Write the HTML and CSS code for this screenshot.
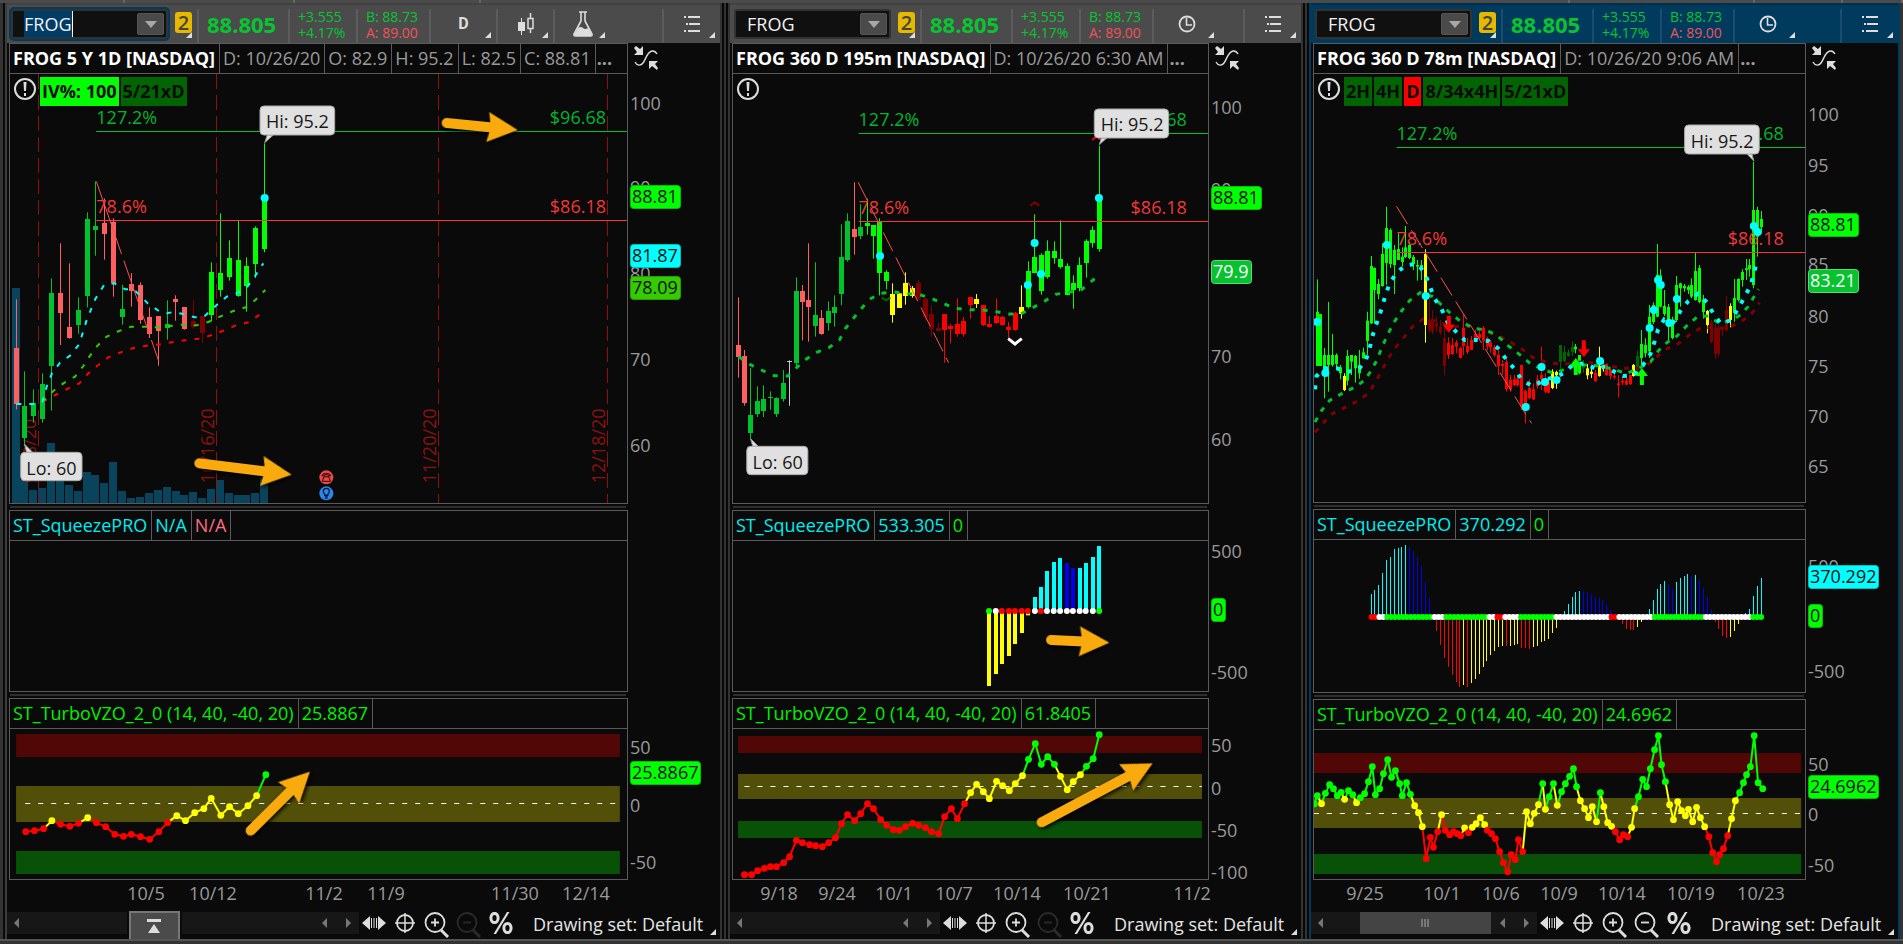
FILE: index.html
```html
<!DOCTYPE html>
<html lang="en">
<head>
<meta charset="utf-8">
<title>FROG charts</title>
<link rel="stylesheet" href="styles.css">
</head>
<body>
<svg class="sprite" aria-hidden="true">
  <symbol id="i-corner" viewBox="0 0 6 6"><path d="M6 0V6H0Z"/></symbol>
  <symbol id="i-down" viewBox="0 0 14 8"><path d="M0 0H14L7 8Z"/></symbol>
  <symbol id="i-left" viewBox="0 0 6 10"><path d="M5 0V10L0 5Z"/></symbol>
  <symbol id="i-right" viewBox="0 0 6 10"><path d="M1 0V10L6 5Z"/></symbol>
  <symbol id="i-candles" viewBox="0 0 18 22"><path d="M1 9H8V18H1ZM4 5H5V22H4Z"/><path d="M11 5.500H16V15.500H11ZM13.500 0V5M13.500 16V20" fill="none" stroke="#ddd" stroke-width="1.500"/></symbol>
  <symbol id="i-flask" viewBox="0 0 22 26"><path d="M7 1H15M9 1V10L2 23Q1.500 25 3.500 25H18.500Q20.500 25 20 23L13 10V1" fill="none" stroke="#ddd" stroke-width="1.600"/><path d="M6 17Q9 15 11 17T16 17L20 24Q20 25 18 25H4Q2 25 2 24Z"/></symbol>
  <symbol id="i-clock" viewBox="0 0 18 18"><circle cx="9" cy="9" r="7.500" fill="none" stroke="#ddd" stroke-width="1.800"/><path d="M8.500 3V10H14" fill="none" stroke="#ddd" stroke-width="1.600"/></symbol>
  <symbol id="i-list" viewBox="0 0 16 16"><path d="M0 0H2V2H0ZM4 0H16V2H4ZM2 7H4V9H2ZM5 7H16V9H5ZM0 14H2V16H0ZM4 14H16V16H4Z"/></symbol>
  <symbol id="i-alert" viewBox="0 0 24 24"><circle cx="12" cy="12" r="10" fill="none" stroke="#ddd" stroke-width="2"/><path d="M10.500 5H13.500L13 14H11ZM11 16H13V19H11Z"/></symbol>
  <symbol id="i-scale" viewBox="0 0 24 24"><path d="M1 16C3 20 7 20 9 17C12 13 13 6 18 5Q21 4.500 23 8" fill="none" stroke="#ddd" stroke-width="1.400"/><path d="M9 0V9H0L3 6L0 2L2 0L6 3ZM15 15H24L21 18L24 22L23 24L18 20L15 23Z"/></symbol>
  <symbol id="i-pan" viewBox="0 0 24 16"><path d="M8 1V15L0 8ZM16 1V15L24 8ZM9 3H10V13H9ZM11.500 3H12.500V13H11.500ZM14 3H15V13H14Z"/></symbol>
  <symbol id="i-cross" viewBox="0 0 20 20"><path d="M10 0V20M0 10H20" stroke="#ddd" stroke-width="1.500"/><circle cx="10" cy="10" r="8" fill="none" stroke="#ddd" stroke-width="1.800"/></symbol>
  <symbol id="i-zoomin" viewBox="0 0 26 26"><circle cx="11" cy="10.500" r="9.500" fill="none" stroke="#ddd" stroke-width="1.800"/><path d="M17 18L24 25" stroke="#ddd" stroke-width="3"/><path d="M11 6.500V14.500M7 10.500H15" stroke="#ddd" stroke-width="1.800"/></symbol>
  <symbol id="i-zoomout" viewBox="0 0 26 26"><circle cx="11" cy="10.500" r="9.500" fill="none" stroke="#ddd" stroke-width="1.800"/><path d="M17 18L24 25" stroke="#ddd" stroke-width="3"/><path d="M7 10.500H15" stroke="#ddd" stroke-width="1.800"/></symbol>
  <symbol id="i-percent" viewBox="0 0 24 22"><ellipse cx="5.500" cy="6" rx="3.600" ry="4.600" fill="none" stroke="#ddd" stroke-width="3"/><ellipse cx="18.500" cy="16" rx="3.600" ry="4.600" fill="none" stroke="#ddd" stroke-width="3"/><path d="M18 0H20.500L7 22H4.500Z"/></symbol>
  <symbol id="i-expand" viewBox="0 0 14 14"><path d="M0 0H14V3H0ZM7 5L13 14H1Z"/></symbol>
</svg>

<div class="tabs"><span></span><span></span><span></span><span></span><span></span><span></span><span></span></div>

<main class="workspace">
  <div class="edge"></div>

  <section class="panel" data-panel="day">
    <div class="toolbar">
      <div class="symbol">
        <div class="combo focused"><input class="symbol-input active" aria-label="Symbol" value="FROG"><button class="drop" aria-label="Symbols"><svg width="12" height="7"><use href="#i-down"/></svg></button></div>
        <button class="badge">2<svg class="corner"><use href="#i-corner"/></svg></button>
      </div>
      <div class="price">88.805</div>
      <div class="change"><span>+3.555</span><span>+4.17%</span></div>
      <div class="quote"><span>B: 88.73</span><span class="ask">A: 89.00</span></div>
      <button class="tool period">D<svg class="corner"><use href="#i-corner"/></svg></button>
      <button class="tool narrow" aria-label="Chart style"><svg width="18" height="22"><use href="#i-candles"/></svg><svg class="corner"><use href="#i-corner"/></svg></button>
      <button class="tool narrow" aria-label="Studies"><svg width="22" height="26"><use href="#i-flask"/></svg><svg class="corner"><use href="#i-corner"/></svg></button>
      <button class="tool menu" aria-label="Menu"><svg width="16" height="16"><use href="#i-list"/></svg><svg class="corner"><use href="#i-corner"/></svg></button>
    </div>
    <div class="panes">
      <div class="pane main">
        <div class="box">
          <div class="head"><b>FROG 5 Y 1D [NASDAQ]</b><span>D: 10/26/20</span><span>O: 82.9</span><span>H: 95.2</span><span>L: 82.5</span><span>C: 88.81</span><i>...</i></div>
          <div class="plot"><svg class="chart"></svg>
            <div class="flags"><svg class="alert"><use href="#i-alert"/></svg><span class="flag lime">IV%: 100</span><span class="flag">5/21xD</span></div>
          </div>
        </div>
        <div class="axis"><svg class="scale"></svg><button class="fit" aria-label="Scale"><svg width="24" height="24"><use href="#i-scale"/></svg></button></div>
      </div>
      <div class="splitter"></div>
      <div class="pane squeeze">
        <div class="box">
          <div class="head cyan"><span>ST_SqueezePRO</span><span>N/A</span><span class="pink">N/A</span></div>
          <div class="plot"><svg class="chart"></svg></div>
        </div>
        <div class="axis"><svg class="scale"></svg></div>
      </div>
      <div class="splitter"></div>
      <div class="pane vzo">
        <div class="box">
          <div class="head green"><span>ST_TurboVZO_2_0 (14, 40, -40, 20)</span><span>25.8867</span></div>
          <div class="plot"><svg class="chart"></svg></div>
        </div>
        <div class="axis"><svg class="scale"></svg></div>
      </div>
    </div>
    <div class="dates"><svg></svg></div>
    <div class="footer">
      <div class="scroll">
        <button class="step first" aria-label="Scroll left"><svg width="6" height="10"><use href="#i-left"/></svg></button>
        <div class="lane before"></div>
        <button class="expand" aria-label="Expand"><svg width="14" height="14"><use href="#i-expand"/></svg></button>
        <div class="lane after"></div>
        <button class="step" aria-label="Back"><svg width="6" height="10"><use href="#i-left"/></svg></button>
        <button class="step" aria-label="Forward"><svg width="6" height="10"><use href="#i-right"/></svg></button>
      </div>
      <div class="tools">
        <button aria-label="Pan"><svg width="24" height="16"><use href="#i-pan"/></svg></button>
        <button aria-label="Crosshair"><svg width="20" height="20"><use href="#i-cross"/></svg></button>
        <button aria-label="Zoom in"><svg width="26" height="26"><use href="#i-zoomin"/></svg></button>
        <button aria-label="Zoom out" disabled><svg width="26" height="26"><use href="#i-zoomout"/></svg></button>
        <button aria-label="Percent"><svg width="24" height="22"><use href="#i-percent"/></svg></button>
        <button class="set">Drawing set: Default<svg class="corner"><use href="#i-corner"/></svg></button>
      </div>
    </div>
  </section>

  <div class="gutter"></div>

  <section class="panel" data-panel="m195">
    <div class="toolbar">
      <div class="symbol">
        <div class="combo"><input class="symbol-input" aria-label="Symbol" value="FROG"><button class="drop" aria-label="Symbols"><svg width="12" height="7"><use href="#i-down"/></svg></button></div>
        <button class="badge">2<svg class="corner"><use href="#i-corner"/></svg></button>
      </div>
      <div class="price">88.805</div>
      <div class="change"><span>+3.555</span><span>+4.17%</span></div>
      <div class="quote"><span>B: 88.73</span><span class="ask">A: 89.00</span></div>
      <button class="tool" aria-label="Time frame"><svg width="18" height="18"><use href="#i-clock"/></svg><svg class="corner"><use href="#i-corner"/></svg></button>
      <button class="tool menu" aria-label="Menu"><svg width="16" height="16"><use href="#i-list"/></svg><svg class="corner"><use href="#i-corner"/></svg></button>
    </div>
    <div class="panes">
      <div class="pane main">
        <div class="box">
          <div class="head"><b>FROG 360 D 195m [NASDAQ]</b><span>D: 10/26/20 6:30 AM</span><i>...</i></div>
          <div class="plot"><svg class="chart"></svg>
            <div class="flags"><svg class="alert"><use href="#i-alert"/></svg></div>
          </div>
        </div>
        <div class="axis"><svg class="scale"></svg><button class="fit" aria-label="Scale"><svg width="24" height="24"><use href="#i-scale"/></svg></button></div>
      </div>
      <div class="splitter"></div>
      <div class="pane squeeze">
        <div class="box">
          <div class="head cyan"><span>ST_SqueezePRO</span><span>533.305</span><span class="green">0</span></div>
          <div class="plot"><svg class="chart"></svg></div>
        </div>
        <div class="axis"><svg class="scale"></svg></div>
      </div>
      <div class="splitter"></div>
      <div class="pane vzo">
        <div class="box">
          <div class="head green"><span>ST_TurboVZO_2_0 (14, 40, -40, 20)</span><span>61.8405</span></div>
          <div class="plot"><svg class="chart"></svg></div>
        </div>
        <div class="axis"><svg class="scale"></svg></div>
      </div>
    </div>
    <div class="dates"><svg></svg></div>
    <div class="footer">
      <div class="scroll">
        <button class="step first" aria-label="Scroll left"><svg width="6" height="10"><use href="#i-left"/></svg></button>
        <div class="lane"></div>
        <button class="step" aria-label="Back"><svg width="6" height="10"><use href="#i-left"/></svg></button>
        <button class="step" aria-label="Forward"><svg width="6" height="10"><use href="#i-right"/></svg></button>
      </div>
      <div class="tools">
        <button aria-label="Pan"><svg width="24" height="16"><use href="#i-pan"/></svg></button>
        <button aria-label="Crosshair"><svg width="20" height="20"><use href="#i-cross"/></svg></button>
        <button aria-label="Zoom in"><svg width="26" height="26"><use href="#i-zoomin"/></svg></button>
        <button aria-label="Zoom out" disabled><svg width="26" height="26"><use href="#i-zoomout"/></svg></button>
        <button aria-label="Percent"><svg width="24" height="22"><use href="#i-percent"/></svg></button>
        <button class="set">Drawing set: Default<svg class="corner"><use href="#i-corner"/></svg></button>
      </div>
    </div>
  </section>

  <div class="gutter slim"></div>

  <section class="panel selected" data-panel="m78">
    <div class="toolbar">
      <div class="symbol">
        <div class="combo"><input class="symbol-input" aria-label="Symbol" value="FROG"><button class="drop" aria-label="Symbols"><svg width="12" height="7"><use href="#i-down"/></svg></button></div>
        <button class="badge">2<svg class="corner"><use href="#i-corner"/></svg></button>
      </div>
      <div class="price">88.805</div>
      <div class="change"><span>+3.555</span><span>+4.17%</span></div>
      <div class="quote"><span>B: 88.73</span><span class="ask">A: 89.00</span></div>
      <button class="tool" aria-label="Time frame"><svg width="18" height="18"><use href="#i-clock"/></svg><svg class="corner"><use href="#i-corner"/></svg></button>
      <button class="tool menu" aria-label="Menu"><svg width="16" height="16"><use href="#i-list"/></svg><svg class="corner"><use href="#i-corner"/></svg></button>
    </div>
    <div class="panes">
      <div class="pane main">
        <div class="box">
          <div class="head"><b>FROG 360 D 78m [NASDAQ]</b><span>D: 10/26/20 9:06 AM</span><i>...</i></div>
          <div class="plot"><svg class="chart"></svg>
            <div class="flags"><svg class="alert"><use href="#i-alert"/></svg><span class="flag">2H</span><span class="flag">4H</span><span class="flag red">D</span><span class="flag">8/34x4H</span><span class="flag">5/21xD</span></div>
          </div>
        </div>
        <div class="axis"><svg class="scale"></svg><button class="fit" aria-label="Scale"><svg width="24" height="24"><use href="#i-scale"/></svg></button></div>
      </div>
      <div class="splitter"></div>
      <div class="pane squeeze">
        <div class="box">
          <div class="head cyan"><span>ST_SqueezePRO</span><span>370.292</span><span class="green">0</span></div>
          <div class="plot"><svg class="chart"></svg></div>
        </div>
        <div class="axis"><svg class="scale"></svg></div>
      </div>
      <div class="splitter"></div>
      <div class="pane vzo">
        <div class="box">
          <div class="head green"><span>ST_TurboVZO_2_0 (14, 40, -40, 20)</span><span>24.6962</span></div>
          <div class="plot"><svg class="chart"></svg></div>
        </div>
        <div class="axis"><svg class="scale"></svg></div>
      </div>
    </div>
    <div class="dates"><svg></svg></div>
    <div class="footer">
      <div class="scroll">
        <button class="step first" aria-label="Scroll left"><svg width="6" height="10"><use href="#i-left"/></svg></button>
        <div class="lane short"></div>
        <div class="thumb"><span></span><span></span><span></span></div>
        <button class="step" aria-label="Back"><svg width="6" height="10"><use href="#i-left"/></svg></button>
        <button class="step" aria-label="Forward"><svg width="6" height="10"><use href="#i-right"/></svg></button>
      </div>
      <div class="tools">
        <button aria-label="Pan"><svg width="24" height="16"><use href="#i-pan"/></svg></button>
        <button aria-label="Crosshair"><svg width="20" height="20"><use href="#i-cross"/></svg></button>
        <button aria-label="Zoom in"><svg width="26" height="26"><use href="#i-zoomin"/></svg></button>
        <button aria-label="Zoom out"><svg width="26" height="26"><use href="#i-zoomout"/></svg></button>
        <button aria-label="Percent"><svg width="24" height="22"><use href="#i-percent"/></svg></button>
        <button class="set">Drawing set: Default<svg class="corner"><use href="#i-corner"/></svg></button>
      </div>
    </div>
  </section>

  <div class="edge right"></div>
</main>
<div class="base"></div>
<script src="script.js"></script>
</body>
</html>
```
FILE: styles.css
```css
* { box-sizing: border-box; }

body {
  margin: 0;
  height: 100vh;
  display: flex;
  flex-direction: column;
  background: #0a0a0a;
  color: #9a9a9a;
  font: 18px/24px "Open Sans", "Noto Sans", sans-serif;
  overflow: hidden;
}

button, input {
  font: inherit;
  color: inherit;
  background: none;
  border: 0;
  padding: 0;
  margin: 0;
}

svg { display: block; fill: #ddd; }
.sprite { position: absolute; width: 0; height: 0; }

.tabs {
  height: 3px;
  display: grid;
  grid-template-columns: 125fr 170fr 186fr 1089fr 185fr 88fr 60fr;
  background: #4b4b4b;
}
.tabs span { border-right: 2px solid #666; }

.workspace {
  flex: 1;
  min-height: 0;
  display: grid;
  grid-template-columns: 7px 713fr 10px 571fr 8px 591fr 3px;
}
.edge { background: linear-gradient(90deg, #333 3px, #0a0a0a 3px 5px, #3c3c3c 5px); }
.edge.right { background: #333; }
.gutter { background: linear-gradient(90deg, #333 2px, #080808 2px 4px, #333 4px 6px, #080808 6px 8px, #333 8px); }
.gutter.slim { background: linear-gradient(90deg, #333 2px, #080808 2px 4px, #333 4px 6px, #080808 6px); }
.base { height: 5px; border-top: 2px solid #555; background: #333; }

.panel { display: flex; flex-direction: column; min-width: 0; }
.panel.selected { border: solid #003a5c; border-width: 0 2px; }

.toolbar {
  height: 40px;
  padding-top: 4px;
  display: flex;
  background: #4b4b4b;
  border-top: 2px solid #424242;
  color: #09c432;
}
.selected .toolbar { background: #003a5c; border-color: #00304d; }
.toolbar > * { border-left: 2px solid #5c5c5c; }
.selected .toolbar > * { border-color: #1d4d6c; }
.toolbar > .symbol { width: 190px; border: 0; display: flex; gap: 7px; padding-left: 4px; }
.combo {
  width: 157px;
  height: 30px;
  display: flex;
  align-items: center;
  justify-content: space-between;
  padding: 0 2px 0 11px;
  background: #101010;
  border: 2px solid #333;
  border-radius: 3px;
}
.combo.focused { box-shadow: 0 0 0 2px #003a5c; }
.symbol-input { width: 90px; height: 26px; color: #f0f0f0; outline: 0; }
.symbol-input.active { width: 49px; background: #003d66; border-right: 1px solid #fff; }
.drop { width: 27px; height: 22px; background: #4a4a4a; border: 1px solid #555; border-radius: 2px; display: grid; place-items: center; }
.drop svg { fill: #a8a8a8; }
.badge {
  position: relative;
  width: 17px;
  height: 21px;
  margin-top: 3px;
  background: #e6b800;
  border-radius: 3px;
  color: #444;
  font-weight: 600;
  font-size: 20px;
  line-height: 20px;
}
.corner { position: absolute; right: 5px; bottom: 5px; width: 6px; height: 6px; }
.badge .corner { right: 0; bottom: -5px; }
.price { width: 91px; padding-left: 8px; font-size: 22px; font-weight: 700; line-height: 31px; }
.change, .quote { display: flex; flex-direction: column; padding-left: 8px; font-size: 14px; line-height: 16px; }
.change { width: 68px; }
.quote { width: 73px; }
.ask { color: #f0525a; }
.tool { position: relative; width: 67px; height: 34px; display: grid; place-items: center; color: #ddd; padding-bottom: 4px; }
.tool.narrow { width: 57px; }
.tool.menu { width: 58px; margin-left: auto; }
.tool.period { font: 700 16px/24px Roboto, sans-serif; }

.panes { flex: 1; min-height: 0; display: flex; flex-direction: column; padding-left: 2px; }
.pane { display: flex; min-height: 0; flex: 182 1 0; }
.pane.main { flex-grow: 461; }
.selected .pane.main { flex-grow: 460; }
.selected .pane.squeeze { flex-grow: 184; }
.selected .pane.vzo { flex-grow: 181; }
.splitter { height: 6px; padding: 2px 0; margin: 0 94px 0 1px; }
.splitter::before { content: ""; display: block; height: 2px; background: #2e2e2e; }
.box { flex: 1; min-width: 0; display: flex; flex-direction: column; border: 1px solid #5a5a5a; }
.head { height: 30px; display: flex; border-bottom: 1px solid #5a5a5a; white-space: nowrap; line-height: 28px; overflow: hidden; }
.head > * { padding: 0 4px 0 3px; border-right: 1px solid #5a5a5a; }
.head b { color: #fff; }
.head i { border: 0; padding: 0 1px; font-style: normal; font-weight: 700; }
.cyan { color: #00ecf0; }
.pink { color: #ff6b81; }
.green { color: #00f000; }
.plot { position: relative; flex: 1; min-height: 0; overflow: hidden; }
.chart { position: absolute; inset: 0; width: 100%; height: 100%; }
.flags { position: absolute; top: 3px; left: 3px; display: flex; gap: 2px; }
.alert { width: 24px; height: 24px; margin-right: 1px; }
.flag { height: 29px; padding: 0 2px; background: #006400; color: #0a0a0a; font-weight: 700; line-height: 29px; }
.flag.lime { background: #0f0; }
.flag.red { background: #f00; }
.axis { position: relative; width: 92px; }
.scale { position: absolute; inset: 0; width: 100%; height: 100%; overflow: visible; }
.fit { position: relative; display: block; margin: 3px 0 0 6px; }

.dates { height: 31px; padding-left: 2px; }
.dates svg { width: 100%; height: 100%; }

.footer { height: 28px; padding-top: 1px; display: flex; align-items: flex-start; }
.scroll { flex: 1; height: 22px; display: flex; background: #171717; }
.step { width: 23px; display: grid; place-items: center; }
.step.first { width: 19px; }
.step svg { fill: #777; }
.lane { flex: 1; }
.lane.before { flex: 103; }
.lane.after { flex: 134; }
.expand {
  width: 51px;
  height: 28px;
  margin-top: -1px;
  display: grid;
  place-items: center;
  background: #4b4b4b;
  border: 2px solid #777;
  border-bottom: 0;
  box-shadow: 0 0 0 2px #0a0a0a;
}
.lane.short { flex: 30; }
.thumb { flex: 133; background: #444; display: flex; gap: 1px; align-items: center; justify-content: center; }
.thumb span { width: 2px; height: 8px; background: #777; }
.tools { width: 361px; height: 27px; display: flex; }
.tools button { width: 32px; height: 22px; display: grid; place-items: center; }
.tools button:first-child { width: 30px; }
.tools button:disabled { opacity: 0.15; }
.tools .set { position: relative; width: 203px; height: 24px; display: block; padding-left: 16px; text-align: left; color: #e4e4e4; line-height: 23px; }
.tools .set .corner { right: 4px; bottom: 1px; }

svg text { font-size: 18px; }
```
FILE: script.js
```js
const C = {
  g: '#00c22d', G: '#00ff00', p: '#ff5f5f', R: '#ff0000', d: '#7f0000',
  D: '#006400', Y: '#ffff00', w: '#c8c8c8', W: '#ffffff', C: '#00ffff', B: '#0000f5'
};
const NS = 'http://www.w3.org/2000/svg';

/* A plane maps data units to the current size of its svg. */
class Plane {
  constructor(svg, area, grid) {
    svg.replaceChildren();
    this.svg = svg;
    const r = svg.getBoundingClientRect();
    this.W = r.width;
    this.H = r.height;
    this.a = area;
    this.g = grid;
  }
  x(v) { return (this.g.ox + v / this.g.kx - this.a[0]) * this.W / this.a[2]; }
  y(v) { return (this.g.oy + v / this.g.ky - this.a[1]) * this.H / this.a[3]; }
  el(tag, attrs, text) {
    const e = document.createElementNS(NS, tag);
    for (const k in attrs) e.setAttribute(k, attrs[k]);
    if (text !== undefined) e.textContent = text;
    this.svg.appendChild(e);
    return e;
  }
  line(x1, y1, x2, y2, stroke, extra) {
    return this.el('line', { x1: this.x(x1), y1: this.y(y1), x2: this.x(x2), y2: this.y(y2), stroke, ...extra });
  }
  level(x1, y, stroke) {
    this.el('rect', { x: this.x(x1), y: Math.round(this.y(y) - 0.5), width: this.W, height: 1, fill: stroke });
  }
  text(x, y, s, fill, anchor) {
    this.el('text', { x: this.x(x), y: this.y(y), fill, 'text-anchor': anchor || 'start' }, s);
  }
  dot(x, y, r, fill) { this.el('circle', { cx: this.x(x), cy: this.y(y), r, fill }); }
  path(pts, stroke, width, dash) {
    const d = pts.map((p, i) => (i ? 'L' : 'M') + this.x(p[0]) + ' ' + this.y(p[1])).join('');
    this.el('path', { d, stroke, fill: 'none', 'stroke-width': width, 'stroke-dasharray': dash || 'none' });
  }
  candles(list, bw) {
    for (const [x, hi, top, bot, lo, c] of list) {
      const cx = Math.round(this.x(x) - 0.5);
      this.el('rect', { x: cx, y: this.y(hi), width: 1, height: this.y(lo) - this.y(hi), fill: C[c] });
      this.el('rect', { x: cx - (bw - 1) / 2, y: this.y(top), width: bw, height: Math.max(1, this.y(bot) - this.y(top)), fill: C[c] });
    }
  }
  callout(x1, y1, x2, y2, tip, base, tx, ty, s) {
    this.el('path', { d: `M${this.x(tip[0])} ${this.y(tip[1])}L${this.x(base[0])} ${this.y(base[2])}H${this.x(base[1])}Z`, fill: '#e0e0e0', stroke: '#999' });
    this.el('rect', { x: this.x(x1), y: this.y(y1), width: this.x(x2) - this.x(x1), height: this.y(y2) - this.y(y1), rx: 4, fill: '#e0e0e0', stroke: '#aaa' });
    this.text(tx, ty, s, '#181818');
  }
  arrow(x1, y1, x2, y2) {
    const ax = this.x(x1), ay = this.y(y1), bx = this.x(x2), by = this.y(y2);
    const len = Math.hypot(bx - ax, by - ay), a = Math.atan2(by - ay, bx - ax) * 180 / Math.PI;
    this.el('path', {
      d: `M0 -5H${len - 28}L${len - 30} -15L${len} 0L${len - 30} 15L${len - 28} 5H0A5 5 0 0 1 0 -5Z`,
      transform: `translate(${ax} ${ay}) rotate(${a})`, fill: '#f9ab0e',
      style: 'filter:drop-shadow(1px 2px 2px #000)'
    });
  }
  fib(x, right, up, upText, dn, dnText, diag, dash) {
    this.level(x, up, '#00c22d');
    this.level(x, dn, '#ff3333');
    this.path(diag, '#ff5050', 1, dash);
    this.text(x, upText, '127.2%', '#00b52d');
    this.text(right, upText, '$96.68', '#00b52d', 'end');
    this.text(x, dnText, '78.6%', '#f03838');
    this.text(right, dnText, '$86.18', '#f03838', 'end');
  }
}

const DATA = {
  day: {
    main: {
      area: [10, 74, 617, 429], grid: { ox: 0, oy: 110, kx: 3, ky: 3 },
      candles: [[49,568,714,882,898,'p'],[73,784,888,984,1002,'g'],[100,838,879,918,938,'g'],[127,790,822,927,938,'g'],[154,505,549,768,902,'g'],[181,400,549,609,705,'p'],[208,460,651,684,686,'p'],[235,562,600,645,671,'g'],[262,307,327,558,592,'g'],[286,214,348,360,437,'g'],[313,265,339,372,449,'p'],[340,325,336,519,560,'p'],[367,524,597,621,644,'g'],[394,489,522,543,590,'p'],[421,517,525,630,641,'p'],[448,592,621,672,684,'p'],[475,618,618,663,767,'p'],[502,571,642,654,689,'g'],[526,556,567,576,632,'p'],[553,591,591,657,659,'p'],[580,571,633,651,656,'d'],[607,618,618,669,700,'d'],[634,457,486,615,634,'G'],[661,310,489,540,560,'G'],[688,391,444,501,512,'G'],[715,333,450,558,560,'G'],[739,442,468,528,605,'G'],[766,349,354,462,504,'G'],[793,100,264,417,427,'G']],
      volume: [[36,534],[60,1110],[87,1140],[114,1134],[141,999],[168,1110],[195,1125],[222,1143],[249,1086],[273,1095],[300,1119],[327,1056],[354,1143],[381,1164],[408,1161],[435,1149],[462,1140],[489,1131],[515,1143],[540,1155],[567,1146],[594,1164],[621,1137],[648,1110],[675,1149],[702,1155],[726,1155],[753,1149],[780,1100]],
      cyan: [[49,882],[100,882],[127,876],[140,830],[156,790],[180,758],[210,737],[238,702],[260,630],[286,567],[313,524],[343,520],[376,538],[400,538],[420,556],[443,580],[478,604],[500,610],[520,606],[550,612],[585,622],[612,620],[650,585],[680,560],[712,549],[742,530],[766,497],[790,460]],
      green: [[127,876],[160,843],[190,820],[225,800],[250,768],[268,740],[290,710],[320,680],[357,663],[393,650],[430,650],[470,652],[510,648],[548,644],[590,646],[625,636],[660,620],[700,603],[738,592],[766,570],[796,540]],
      red: [[127,876],[166,855],[205,835],[238,820],[265,790],[295,765],[325,742],[362,727],[400,714],[440,707],[480,703],[515,697],[555,691],[595,686],[630,677],[668,663],[705,647],[745,637],[785,610]],
      expiry: [[115,'9/18/20'],[649,'10/16/20'],[1315,'11/20/20'],[1822,'12/18/20']]
    },
    vzo: {
      area: [10, 729, 617, 150], grid: { ox: 0, oy: 500, kx: 2.178, ky: 3 },
      x: [35, 1350], bands: [702, 771, 858, 966, 1053, 1122], zero: 913, from: 55,
      pts: [['R',56,995,75,992,95,986],['Y',113,962],['R',132,973,152,979,171,970],['Y',191,953],['R',210,968,230,980,250,1003,269,1009,286,1003,306,1010,326,1018,346,995,365,968],['Y',385,947,404,962,424,938,444,926,460,895,481,946,500,920,519,941,540,917,559,887],['G',579,824]],
      arrow: [546, 992, 675, 815]
    },
    axis: {
      main: [[43, 461], ['t', 104, '100'], ['t', 188, '90'], ['t', 274, '80'], ['t', 360, '70'], ['t', 446, '60'], ['G', 197, '88.81'], ['C', 256, '81.87'], ['k', 288, '78.09']],
      squeeze: [[510, 182]],
      vzo: [[698, 182], ['t', 748, '50'], ['t', 806, '0'], ['t', 863, '-50'], ['G', 773, '25.8867']]
    },
    dates: [[9, 711], [146, '10/5'], [213, '10/12'], [324, '11/2'], [386, '11/9'], [515, '11/30'], [586, '12/14']]
  },
  m195: {
    main: {
      area: [733, 74, 475, 429], grid: { ox: 720, oy: 110, kx: 2.8, ky: 3 },
      candles: [[52,562,705,741,803,'p'],[69,720,738,879,887,'p'],[85,774,915,969,985,'g'],[105,829,873,912,921,'g'],[122,826,867,903,921,'g'],[141,844,861,863,899,'g'],[158,862,864,912,921,'g'],[178,780,819,867,875,'g'],[195,751,753,755,887,'w'],[214,502,543,759,772,'g'],[231,525,543,576,691,'p'],[248,400,570,591,695,'p'],[267,457,615,648,680,'g'],[284,600,624,672,674,'p'],[304,574,603,639,662,'g'],[321,556,591,609,650,'g'],[340,343,441,552,586,'g'],[357,310,333,450,455,'g'],[376,217,357,381,434,'p'],[393,283,351,378,388,'g'],[413,266,339,348,374,'G'],[430,345,345,378,446,'G'],[447,325,336,489,556,'G'],[466,481,486,513,538,'G'],[483,520,552,615,638,'Y'],[502,550,550,594,594,'Y'],[519,487,519,558,584,'Y'],[539,528,534,558,563,'Y'],[556,511,519,568,570,'d'],[575,562,567,621,632,'d'],[592,586,612,657,680,'d'],[612,638,654,663,665,'d'],[628,612,612,660,758,'R'],[645,642,648,657,700,'R'],[665,565,642,672,680,'R'],[682,621,633,672,680,'R'],[701,561,561,585,626,'R'],[718,552,567,582,594,'Y'],[738,585,585,645,648,'R'],[755,618,642,651,653,'R'],[774,565,618,639,641,'R'],[791,618,621,645,647,'R'],[808,636,651,660,692,'R'],[827,606,609,660,662,'R'],[844,526,591,612,626,'Y'],[864,454,483,591,595,'G'],[881,313,441,489,490,'G'],[900,430,435,543,554,'G'],[917,391,423,501,506,'G'],[936,394,423,444,461,'G'],[953,331,447,471,476,'G'],[973,460,468,555,556,'G'],[990,496,519,540,596,'G'],[1007,442,465,534,544,'G'],[1026,388,393,459,503,'G'],[1043,349,360,399,413,'G'],[1062,108,264,417,425,'G']],
      green: [[52,740],[85,764],[120,782],[152,797],[190,798],[213,774],[242,747],[271,727],[306,712],[334,691],[351,656],[372,627],[394,598],[418,568],[450,550],[488,546],[524,551],[560,554],[594,566],[626,581],[660,595],[700,599],[735,600],[770,604],[808,612],[842,612],[876,593],[908,574],[940,553],[975,547],[1010,541],[1038,516],[1065,492]],
      dots: [[448,438],[881,399],[899,492],[862,525],[1061,264]]
    },
    squeeze: {
      area: [733, 541, 475, 150], grid: { ox: 720, oy: 500, kx: 2.658, ky: 3 }, zero: 333, bar: 4, r: 3,
      bars: [['Y',715,558,733,522,749,492,768,468,784,432,802,399,818,346],['C',837,291,853,261,869,213,887,186,904,174],['B',922,189,938,204],['C',956,204,972,189,991,171,1008,138]],
      dots: [[715,'G'],[733,'W'],[749,'R'],[768,'R'],[784,'R'],[802,'R'],[818,'R'],[837,'W'],[853,'R'],[869,'W'],[887,'W'],[904,'W'],[922,'W'],[938,'W'],[956,'W'],[972,'W'],[991,'W'],[1008,'G']],
      arrow: [880, 420, 1035, 428]
    },
    vzo: {
      area: [733, 729, 475, 150], grid: { ox: 720, oy: 500, kx: 2.658, ky: 3 },
      x: [48, 1281], bands: [708, 759, 822, 897, 963, 1014], zero: 862, from: 65,
      pts: [['R',65,1124,84,1124,100,1112,118,1105,134,1100,150,1100,169,1088,185,1070,203,1021,219,1028,238,1034,254,1037,272,1040,289,1028,307,1013,323,971,339,944,358,962,374,941,392,911,408,926,427,959,443,976,461,989,477,991,493,980,512,970,528,976,546,983,562,995,581,1001,597,950,615,926,631,956,650,911],['Y',666,878,682,853,700,875,716,896,735,844,751,857,769,872,785,851,804,827],['G',820,778,838,731,854,793,871,770,889,793],['Y',905,829,923,869,939,845,958,824],['G',974,799,992,776,1008,704]],
      arrow: [855, 967, 1150, 790]
    },
    axis: {
      main: [[43, 461], ['t', 108, '100'], ['t', 190, '90'], ['t', 357, '70'], ['t', 440, '60'], ['G', 198, '88.81'], ['g', 272, '79.9']],
      squeeze: [[510, 182], ['t', 552, '500'], ['t', 673, '-500'], ['G', 610, '0']],
      vzo: [[698, 182], ['t', 746, '50'], ['t', 789, '0'], ['t', 831, '-50'], ['t', 873, '-100']]
    },
    dates: [[732, 569], [779, '9/18'], [837, '9/24'], [894, '10/1'], [954, '10/7'], [1017, '10/14'], [1087, '10/21'], [1192, '11/2']]
  },
  m78: {
    main: {
      area: [1314, 74, 491, 428], grid: { ox: 1300, oy: 110, kx: 2.6, ky: 3 },
      candles: [[45,508,605,768,768,'G'],[53,612,612,768,768,'G'],[64,714,735,790,865,'G'],[74,576,735,765,845,'G'],[85,672,735,765,770,'G'],[95,730,735,762,780,'G'],[106,765,772,790,808,'G'],[116,790,798,840,843,'Y'],[123,720,738,812,826,'G'],[134,735,735,755,795,'G'],[145,735,738,775,818,'G'],[155,720,765,790,806,'G'],[165,713,727,745,745,'G'],[176,605,632,693,735,'G'],[186,438,468,640,642,'G'],[194,472,474,540,640,'G'],[204,507,522,552,568,'G'],[214,400,432,528,530,'G'],[225,290,354,459,524,'G'],[235,355,360,462,474,'G'],[245,405,420,465,552,'G'],[256,370,417,450,450,'G'],[266,412,440,456,470,'G'],[274,348,412,441,444,'G'],[285,397,405,444,448,'G'],[296,435,441,462,480,'G'],[306,450,465,470,512,'G'],[316,450,465,480,510,'G'],[326,418,432,645,698,'Y'],[337,565,630,660,668,'d'],[345,600,635,665,672,'d'],[355,620,640,650,665,'d'],[366,630,650,668,675,'d'],[376,640,684,768,797,'d'],[386,682,699,735,747,'R'],[396,684,705,732,735,'R'],[407,690,697,710,730,'R'],[417,710,714,744,745,'R'],[425,612,654,708,735,'R'],[436,684,708,726,732,'R'],[446,678,690,720,720,'R'],[456,660,672,690,692,'R'],[467,660,672,684,690,'R'],[477,648,654,692,720,'R'],[488,680,685,708,720,'R'],[496,690,697,712,728,'R'],[506,705,712,735,740,'R'],[516,715,735,768,795,'R'],[527,750,762,768,795,'R'],[537,745,756,838,845,'R'],[547,795,810,838,845,'R'],[557,795,808,826,828,'R'],[565,795,808,825,830,'R'],[576,765,765,890,900,'R'],[586,840,843,895,940,'R'],[597,808,834,864,868,'R'],[607,820,838,868,870,'R'],[617,795,808,828,836,'R'],[628,710,795,808,840,'R'],[638,790,805,845,850,'R'],[645,800,815,848,850,'R'],[656,778,785,834,837,'Y'],[667,782,786,796,836,'Y'],[677,705,705,756,780,'D'],[687,708,726,753,756,'D'],[697,718,727,738,740,'D'],[708,694,711,726,738,'D'],[716,702,710,718,730,'G'],[727,735,735,790,793,'G'],[737,750,760,775,788,'D'],[747,762,775,796,808,'Y'],[758,770,785,792,804,'Y'],[768,780,789,813,815,'R'],[778,710,760,798,800,'Y'],[789,750,765,775,785,'Y'],[797,760,762,795,798,'R'],[807,775,780,798,808,'R'],[818,784,797,802,808,'R'],[828,795,820,826,862,'R'],[838,795,812,818,826,'R'],[848,800,812,824,826,'R'],[859,795,795,822,825,'R'],[867,762,765,798,800,'Y'],[878,722,738,778,795,'D'],[888,660,702,744,765,'G'],[898,685,705,730,742,'G'],[909,585,620,724,744,'G'],[919,577,585,636,642,'G'],[929,402,494,620,622,'G'],[938,478,496,590,592,'G'],[948,540,588,612,618,'G'],[958,582,591,650,690,'G'],[969,620,640,684,688,'G'],[979,498,525,630,636,'G'],[989,518,520,535,590,'G'],[999,522,528,535,545,'G'],[1010,525,530,540,552,'G'],[1018,505,525,560,565,'G'],[1028,427,483,570,572,'G'],[1039,465,474,576,580,'G'],[1049,555,568,606,626,'G'],[1060,600,603,645,670,'Y'],[1070,630,636,696,700,'d'],[1080,640,654,732,748,'d'],[1088,640,654,732,742,'d'],[1099,650,652,660,678,'d'],[1109,558,600,660,665,'d'],[1119,580,588,630,652,'Y'],[1130,507,564,608,635,'G'],[1140,505,507,570,575,'G'],[1151,478,486,510,530,'G'],[1161,447,475,480,510,'G'],[1169,447,465,478,500,'G'],[1179,155,300,525,535,'G'],[1190,290,300,380,440,'G'],[1200,303,327,351,370,'G']],
      cyan: [[39,838],[43,798],[64,775],[96,775],[123,786],[154,776],[172,748],[182,710],[190,672],[201,634],[212,597],[221,560],[232,523],[250,490],[274,466],[306,461],[325,492],[337,526],[348,562],[368,597],[385,640],[405,664],[428,690],[460,690],[490,693],[516,716],[536,748],[558,777],[576,808],[604,829],[640,808],[668,800],[690,786],[708,765],[740,760],[775,780],[790,770],[812,782],[840,798],[868,796],[892,765],[911,732],[922,694],[931,658],[947,628],[970,638],[989,603],[1009,574],[1035,551],[1058,577],[1075,612],[1095,642],[1120,630],[1140,595],[1155,562],[1172,526],[1180,488],[1190,450]],
      green: [[39,936],[56,902],[77,871],[109,851],[141,832],[166,813],[184,784],[200,750],[213,712],[228,673],[245,636],[264,603],[285,572],[312,548],[345,560],[368,585],[393,612],[420,636],[452,655],[484,660],[514,678],[540,706],[568,731],[596,758],[625,775],[655,788],[680,782],[715,765],[760,765],[795,772],[850,790],[880,775],[912,755],[932,722],[955,697],[980,678],[1005,648],[1033,620],[1062,618],[1090,640],[1125,630],[1145,615],[1165,590],[1178,565],[1192,538]],
      red: [[39,967],[62,937],[84,911],[116,893],[150,873],[178,850],[194,820],[212,783],[228,748],[245,717],[268,685],[290,653],[320,627],[350,632],[400,650],[440,648],[480,662],[515,677],[548,697],[580,720],[605,742],[640,757],[680,763],[740,755],[790,765],[840,775],[880,775],[910,760],[930,738],[955,716],[985,700],[1015,672],[1045,652],[1110,655],[1145,636],[1172,615],[1195,578]],
      dots: [[45,636],[66,789],[226,405],[327,558],[587,891],[628,771],[637,816],[667,810],[780,753],[909,654],[920,600],[931,510],[938,525],[960,639],[980,567],[1180,348],[1190,366]]
    },
    squeeze: {
      area: [1314, 540, 491, 152], grid: { ox: 1300, oy: 500, kx: 2.6, ky: 3 }, zero: 351, bar: 1, r: 3,
      bars: [['C',186,282,194,270,204,255,214,219,225,180,235,171,245,147,256,144,264,141,274,135],['B',284,141,295,153,305,171,316,198,326,246,337,294],['R',355,393,365,435,376,474,386,501,396,525,407,546,414,561],['Y',425,555],['R',435,561],['Y',446,549,456,537,466,522,477,501,485,483,495,465,505,453,516,441,526,438],['R',537,438],['Y',547,438,557,435,565,432],['R',576,444,586,444,596,447],['Y',607,441,617,438,628,426,635,423,646,417,656,399,667,384],['C',687,333,698,312,708,291,716,276,726,273],['B',737,273,747,276,758,282,768,291,778,294,786,300,797,315,808,330],['R',838,372,849,387,859,390,867,390],['Y',878,381,888,366],['C',909,327,919,300,929,267,937,252,948,243],['B',958,252,968,267],['C',979,246,989,234,1000,228,1007,222],['B',1018,228],['C',1028,225],['B',1039,240,1049,264,1059,291,1070,327],['R',1080,366,1088,387,1098,408,1109,414],['Y',1119,411,1130,393,1140,372],['C',1158,339,1169,327,1179,288,1189,258,1200,234]],
      runs: [['R',200],['W',220],['G',340],['W',380],['G',490],['W',511],['R',531],['W',570],['G',662],['W',803],['R',823],['W',914],['G',1055],['W',1175],['G',1205]]
    },
    vzo: {
      area: [1314, 730, 491, 149], grid: { ox: 1300, oy: 690, kx: 2.6, ky: 3 },
      x: [36, 1303], bands: [189, 249, 324, 414, 492, 552], zero: 371, from: 36,
      pts: [['G',37,342,45,317],['Y',56,341],['G',66,310,77,284,87,296,97,317,107,307],['Y',116,328],['G',126,302,137,314],['Y',147,338],['G',157,323,168,311,178,275,188,230,196,314,207,296,217,251,228,209,238,262,248,242,259,281,266,317,277,278,287,313],['Y',298,347,308,368,318,410],['R',328,506,339,442,347,472,358,425],['Y',368,374],['R',378,421,389,434,399,425,409,431,418,437],['Y',428,414],['R',438,428],['Y',448,412,458,401,469,383,480,404],['R',487,421,498,431,508,446,519,485,529,518,540,545,549,494,560,509,568,449,579,485],['Y',589,365,599,401,609,370,620,344],['G',631,281],['Y',638,358],['G',648,320,659,281],['Y',669,346],['G',680,305,690,281,701,259,711,236,719,290],['Y',729,332,740,356,750,383,760,350,771,395],['G',781,308],['Y',790,350,800,398,810,409],['R',820,425,831,449,841,434,852,440],['Y',862,412,870,356],['G',880,320,891,268,901,290,911,236,922,179,932,137,940,224,950,275],['Y',961,344,971,389,982,335,992,362,1002,377,1010,358,1021,395,1031,352,1041,383,1052,410],['R',1063,440,1073,488,1083,515,1091,494,1101,476,1112,437],['Y',1122,386,1132,332],['G',1143,308,1153,278,1161,254,1171,230,1181,137,1191,278,1203,296]]
    },
    axis: {
      main: [[43, 460], ['t', 115, '100'], ['t', 166, '95'], ['t', 216, '90'], ['t', 265, '85'], ['t', 317, '80'], ['t', 367, '75'], ['t', 417, '70'], ['t', 467, '65'], ['G', 225, '88.81'], ['g', 281, '83.21']],
      squeeze: [[509, 184], ['t', 567, '500'], ['t', 672, '-500'], ['C', 577, '370.292'], ['G', 616, '0']],
      vzo: [[699, 181], ['t', 765, '50'], ['t', 815, '0'], ['t', 866, '-50'], ['G', 787, '24.6962']]
    },
    dates: [[1313, 585], [1365, '9/25'], [1442, '10/1'], [1501, '10/6'], [1559, '10/9'], [1622, '10/14'], [1691, '10/19'], [1761, '10/23']]
  }
};

const MAIN = {
  day(p, d) {
    for (const [x, top] of d.volume) {
      p.el('rect', { x: Math.round(p.x(x)), y: p.y(top), width: 8, height: p.H - p.y(top), fill: '#0a445c' });
    }
    for (const [x, label] of d.expiry) {
      const px = Math.round(p.x(x)) + 0.5;
      p.el('line', { x1: px, x2: px, y1: 0, y2: p.H, stroke: '#8f1010', 'stroke-dasharray': '15 6' });
      p.el('text', { transform: `translate(${px - 3} ${p.y(1120)}) rotate(-90)`, fill: '#8f1010' }, label);
    }
    p.candles(d.candles, 5);
    p.path(d.red, '#ff0000', 2, '5 8');
    p.path(d.green, '#33cc00', 2, '5 8');
    p.path(d.cyan, '#00ffff', 2, '5 8');
    p.fib(289, 1818, 64, 41, 331, 308, [[289, 214], [475, 750]], '77 7');
    p.dot(794, 264, 4, C.C);
    p.callout(780, -12, 1004, 75, [794, 98], [802, 820, 75], 798, 54, 'Hi: 95.2');
    p.callout(62, 1027, 246, 1112, [73, 1002], [80, 98, 1027], 79, 1095, 'Lo: 60');
    p.arrow(1340, 39, 1553, 60);
    p.arrow(598, 1060, 875, 1094);
    p.dot(979, 1102, 7, '#f04848');
    p.dot(979, 1150, 7, '#2a86ea');
    const at = `translate(${p.x(979)} ${p.y(1102)})`;
    p.el('path', { d: 'M-4.500 -1.500Q-4 -4 0 -4T4.500 -1.500H2V-2.500H-2V-1.500ZM-2.500 -.5H2.500L4 4H-4Z', fill: 'none', stroke: '#2a0808', transform: at });
    const bulb = `translate(${p.x(979)} ${p.y(1150)})`;
    p.el('path', { d: 'M-1.500 2V1Q-3 0 -3 -2A3 3 0 0 1 3 -2Q3 0 1.500 1V2ZM-1.500 3.500H1.500M-1 5H1', fill: 'none', stroke: '#06182c', 'stroke-width': 1.3, transform: bulb });
  },
  m195(p, d) {
    p.candles(d.candles, 5);
    p.path(d.green, '#00c22d', 3, '5 8');
    p.path([[1042, 90], [1055, 79], [1068, 90]], '#ff0000', 2);
    p.fib(388, 1307, 70, 48, 334, 312, [[387, 217], [640, 758]], '21 7');
    for (const [x, y] of d.dots) p.dot(x, y, 4, C.C);
    p.path([[453, 563], [465, 571], [477, 563]], '#006400', 2);
    p.path([[869, 287], [881, 277], [894, 287]], '#7f0000', 2);
    p.path([[807, 686], [826, 702], [845, 686]], '#ffffff', 3);
    p.callout(1048, -3, 1256, 84, [1062, 104], [1068, 1083, 84], 1066, 64, 'Hi: 95.2');
    p.callout(75, 1009, 246, 1094, [85, 985], [92, 107, 1009], 91, 1076, 'Lo: 60');
  },
  m78(p, d) {
    p.candles(d.candles, 3);
    p.path(d.red, '#7f0000', 3, '5 7');
    p.path(d.green, '#00c22d', 3, '5 7');
    p.path(d.cyan, '#00ffff', 4, '4 8');
    p.fib(251, 1258, 112, 91, 427, 405, [[251, 289], [602, 940]], '21 7');
    for (const [x, y] of d.dots) p.dot(x, y, 4, C.C);
    const mark = (x, y, dir, fill) => p.el('path', {
      d: 'M0 0L6 -8H2V-17H-2V-8H-6Z', fill, transform: `translate(${p.x(x)} ${p.y(y)}) scale(1 ${dir})`
    });
    mark(387, 668, 1, C.R);
    mark(738, 742, 1, C.R);
    mark(717, 744, -1, C.G);
    mark(889, 774, -1, C.G);
    p.callout(1000, 45, 1194, 132, [1180, 153], [1162, 1175, 132], 1016, 113, 'Hi: 95.2');
  }
};

function drawSqueeze(p, d) {
  for (const [c, ...v] of d.bars) {
    for (let i = 0; i < v.length; i += 2) {
      const a = p.y(v[i + 1]), z = p.y(d.zero);
      p.el('rect', { x: Math.round(p.x(v[i]) - d.bar / 2), y: Math.min(a, z), width: d.bar, height: Math.abs(a - z), fill: C[c] });
    }
  }
  if (d.dots) for (const [x, c] of d.dots) p.dot(x, d.zero, d.r, C[c]);
  if (d.runs) {
    let x = 186;
    for (const [c, end] of d.runs) for (; x < end; x += 10.23) p.dot(x, d.zero, d.r, C[c]);
  }
  if (d.arrow) p.arrow(...d.arrow);
}

function drawVzo(p, d) {
  ['#520707', '#525008', '#085208'].forEach((fill, i) => {
    const [a, b] = [d.bands[2 * i], d.bands[2 * i + 1]];
    p.el('rect', { x: p.x(d.x[0]), y: p.y(a), width: p.x(d.x[1]) - p.x(d.x[0]), height: p.y(b) - p.y(a), fill });
  });
  const z = Math.round(p.y(d.zero)) - 0.5;
  p.el('line', { x1: p.x(d.from), x2: p.x(d.x[1]), y1: z, y2: z, stroke: '#fff', 'stroke-dasharray': '5 8' });
  let last = null;
  const dots = [];
  for (const [c, ...v] of d.pts) {
    for (let i = 0; i < v.length; i += 2) {
      if (last) p.line(last[0], last[1], v[i], v[i + 1], C[c], { 'stroke-width': 2 });
      last = [v[i], v[i + 1]];
      dots.push([...last, c]);
    }
  }
  for (const [x, y, c] of dots) p.dot(x, y, 3.4, C[c]);
  if (d.arrow) p.arrow(...d.arrow);
}

const TAGS = {
  G: ['#00ff00', '#101010', '#00c000'], C: ['#00ffff', '#101010', '#00c0c0'],
  k: ['#33cc00', '#101010', '#289c00'], g: ['#06c22e', '#ffffff', '#5adb78']
};

function drawAxis(svg, [[y0, h], ...rows]) {
  const p = new Plane(svg, [0, y0, 92, h], { ox: 0, oy: 0, kx: 1, ky: 1 });
  for (const [kind, y, s] of rows) {
    const cy = p.y(y);
    if (kind === 't') {
      p.el('text', { x: 2, y: cy + 6, fill: '#9a9a9a' }, s);
      continue;
    }
    const [bg, fg, edge] = TAGS[kind];
    const box = p.el('rect', { x: 2.5, y: cy - 11.5, height: 23, rx: 3, fill: bg, stroke: edge });
    const t = p.el('text', { x: 4, y: cy + 6, fill: fg }, s);
    box.setAttribute('width', Math.round(t.getComputedTextLength()) + 4);
  }
}

function draw() {
  document.querySelectorAll('.panel').forEach(panel => {
    const id = panel.dataset.panel, set = DATA[id];
    const chart = k => panel.querySelector('.' + k + ' .chart');
    MAIN[id](new Plane(chart('main'), set.main.area, set.main.grid), set.main);
    if (set.squeeze) drawSqueeze(new Plane(chart('squeeze'), set.squeeze.area, set.squeeze.grid), set.squeeze);
    drawVzo(new Plane(chart('vzo'), set.vzo.area, set.vzo.grid), set.vzo);
    for (const k in set.axis) drawAxis(panel.querySelector('.' + k + ' .scale'), set.axis[k]);
    const [[x0, w], ...labels] = set.dates;
    const p = new Plane(panel.querySelector('.dates svg'), [x0, 0, w, 31], { ox: 0, oy: 0, kx: 1, ky: 1 });
    for (const [x, s] of labels) p.text(x, 20, s, '#9a9a9a', 'middle');
  });
}

draw();
window.addEventListener('resize', draw);
```
